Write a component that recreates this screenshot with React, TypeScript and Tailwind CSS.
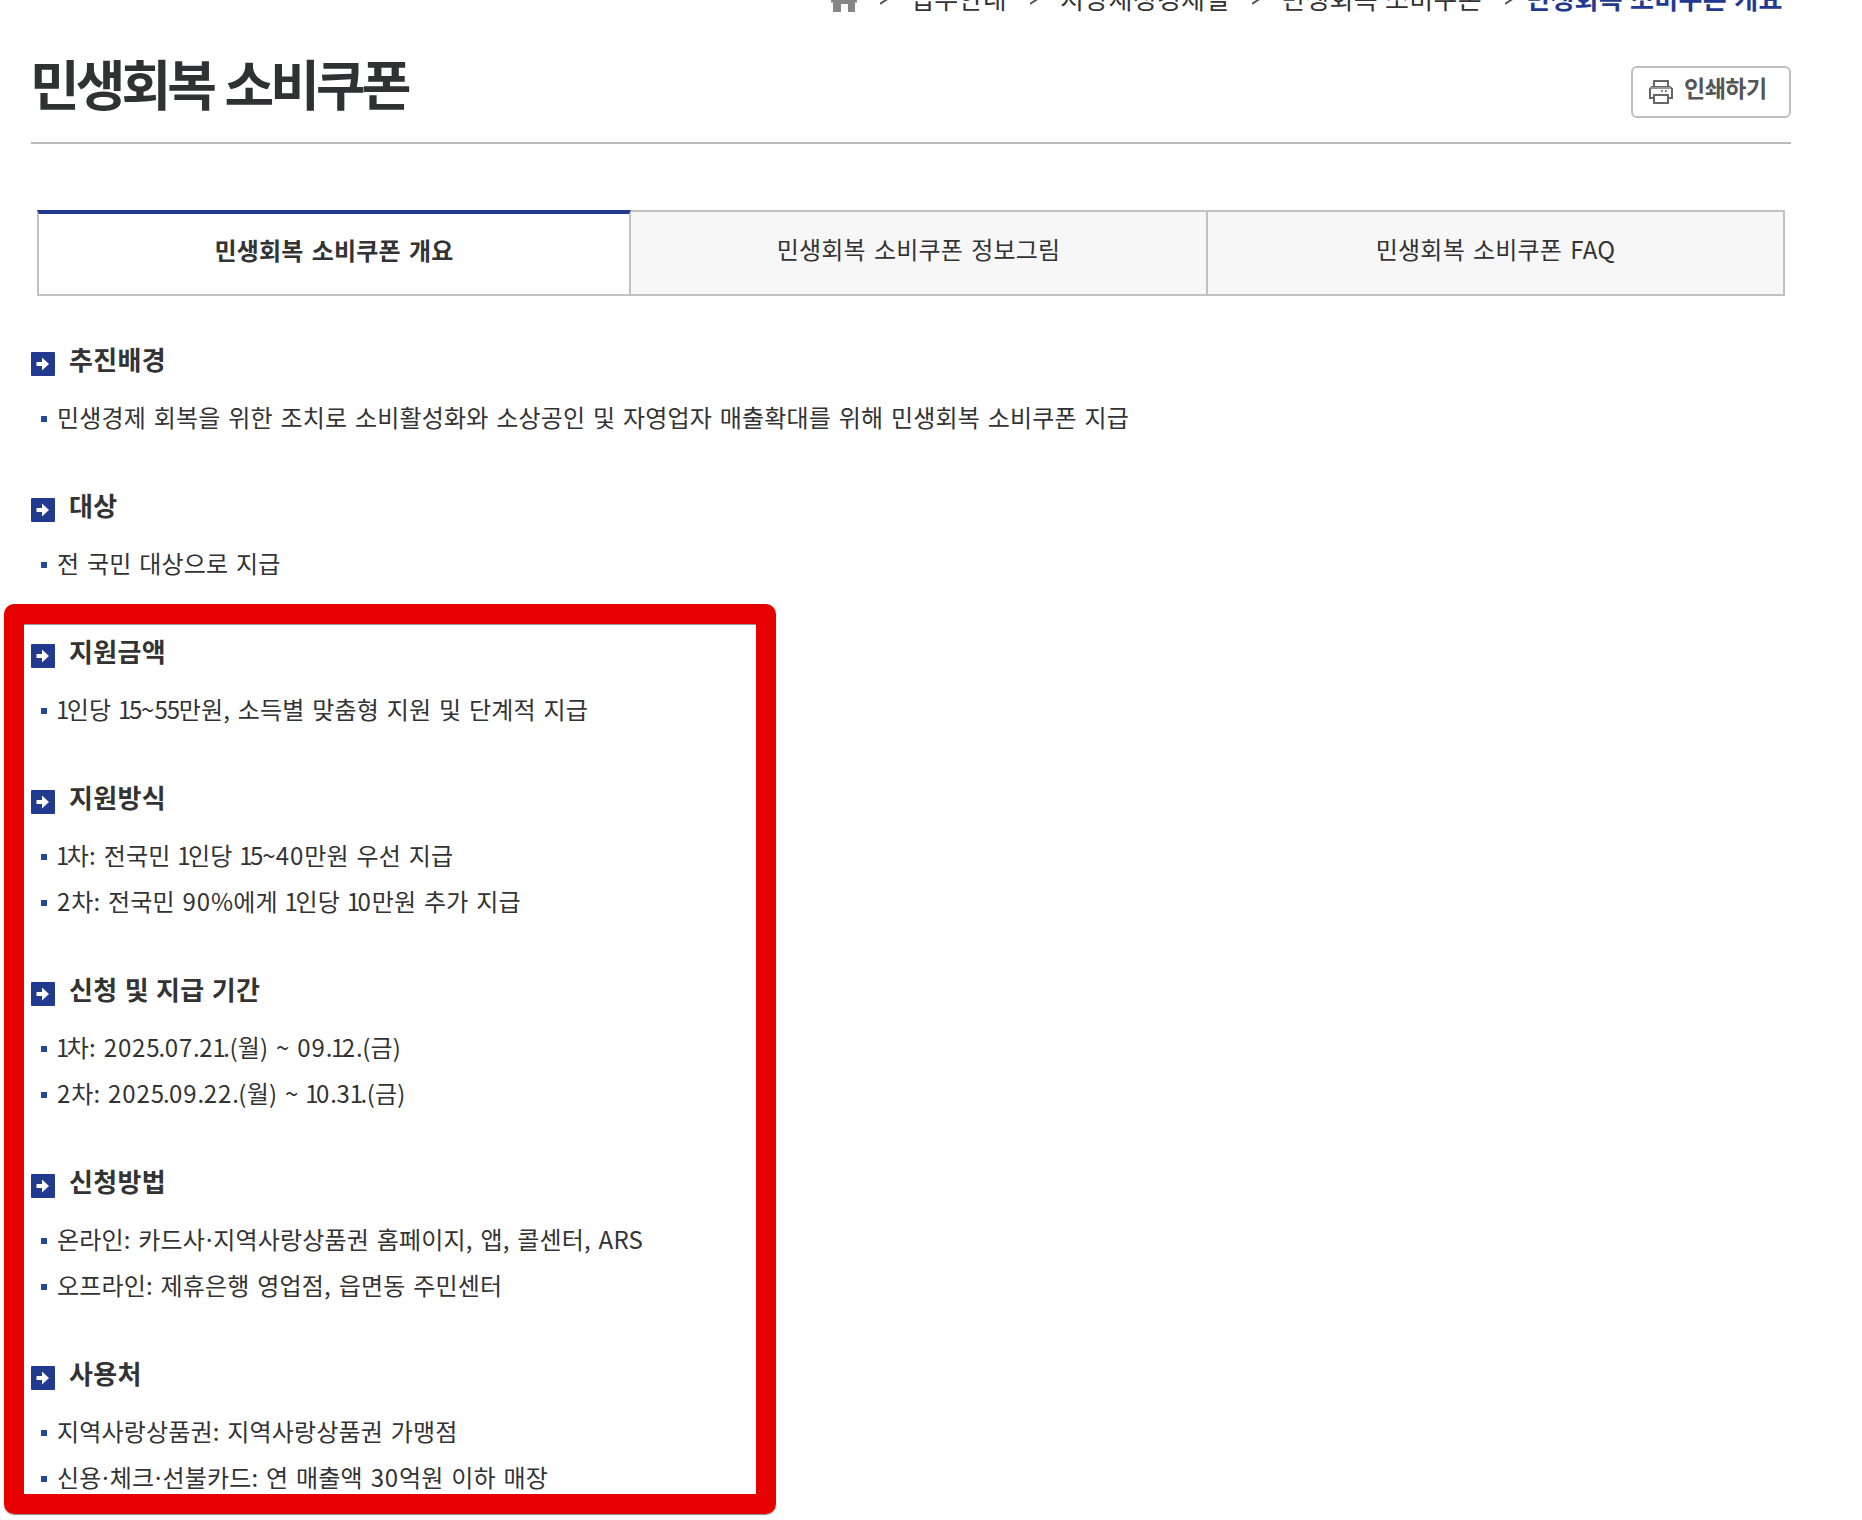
import { clsx } from "clsx"

interface Section {
  title: string
  items: string[]
}

const sections: Section[] = [
  {
    title: "추진배경",
    items: ["민생경제 회복을 위한 조치로 소비활성화와 소상공인 및 자영업자 매출확대를 위해 민생회복 소비쿠폰 지급"],
  },
  { title: "대상", items: ["전 국민 대상으로 지급"] },
  { title: "지원금액", items: ["1인당 15~55만원, 소득별 맞춤형 지원 및 단계적 지급"] },
  {
    title: "지원방식",
    items: ["1차: 전국민 1인당 15~40만원 우선 지급", "2차: 전국민 90%에게 1인당 10만원 추가 지급"],
  },
  {
    title: "신청 및 지급 기간",
    items: ["1차: 2025.07.21.(월) ~ 09.12.(금)", "2차: 2025.09.22.(월) ~ 10.31.(금)"],
  },
  {
    title: "신청방법",
    items: ["온라인: 카드사·지역사랑상품권 홈페이지, 앱, 콜센터, ARS", "오프라인: 제휴은행 영업점, 읍면동 주민센터"],
  },
  {
    title: "사용처",
    items: ["지역사랑상품권: 지역사랑상품권 가맹점", "신용·체크·선불카드: 연 매출액 30억원 이하 매장"],
  },
]

const tabs = [
  { label: "민생회복 소비쿠폰 개요", active: true },
  { label: "민생회복 소비쿠폰 정보그림", active: false },
  { label: "민생회복 소비쿠폰 FAQ", active: false },
]

function HomeIcon() {
  return (
    <svg className="h-7 w-[30px] shrink-0" viewBox="0 0 30 28" fill="#858585">
      <path d="M15 2 28 16.500v2h-2V28h-7v-8h-7v8H4v-9.500H2v-2z" />
    </svg>
  )
}

function PrinterIcon() {
  return (
    <svg className="size-6" viewBox="0 0 24 24" fill="none" stroke="#666" strokeWidth="2">
      <path d="M5 7V1h14v6" />
      <path d="M5 18H1V9l2-2h18l2 2v9h-4" />
      <path d="M2 8h20" stroke="#999" />
      <path d="M5 15h14v8H5z" />
      <path d="M12 11h2M16 11h2" stroke="#888" />
    </svg>
  )
}

function ArrowIcon() {
  return (
    <svg className="mt-1.5 size-6 shrink-0" viewBox="0 0 24 24">
      <rect width="24" height="24" rx="1" fill="#213a8f" />
      <path d="M5.500 10H11V5.500l7 6.500-7 6.500V14H5.500z" fill="#fff" />
    </svg>
  )
}

function Chevron() {
  return (
    <svg className="h-4 w-2.5 shrink-0" viewBox="0 0 10 16" fill="none" stroke="#555" strokeWidth="2">
      <path d="m0 2.500 9 5.500-9 6" />
    </svg>
  )
}

function Breadcrumb() {
  return (
    <nav className="-mt-[18px] flex h-8 items-center pl-[798px] text-[26px] leading-8 whitespace-nowrap text-[#333]">
      <HomeIcon />
      <span className="ml-[21px] flex"><Chevron /></span>
      <span className="ml-[20px] w-[98px] tracking-[0.300px]">업무안내</span>
      <span className="ml-[22px] flex"><Chevron /></span>
      <span className="ml-[20px] w-[170px] tracking-[0.300px]">지방재정경제실</span>
      <span className="ml-[22px] flex"><Chevron /></span>
      <span className="ml-[19px] w-[201px] tracking-[0.300px] [word-spacing:1px]">민생회복 소비쿠폰</span>
      <span className="ml-[23px] flex"><Chevron /></span>
      <strong className="ml-[11px] font-bold tracking-[0.300px] text-[#213a8f] [word-spacing:1px]">민생회복 소비쿠폰 개요</strong>
    </nav>
  )
}

function ItemText({ text }: { text: string }) {
  return (
    <span className="ml-2.5 pb-[5px] text-2xl tracking-[0.170px] whitespace-nowrap [word-spacing:2.200px]">
      {text.split(/(1|5|·|\.|[02-46-9]+)/).map((part, i) => {
        if (part === "1") return <span key={i} className="-ml-px tracking-[-2.500px]">1</span>
        if (part === "5") return <span key={i} className="tracking-[-1.200px]">5</span>
        if (part === ".") return <span key={i} className="tracking-[-0.500px]">.</span>
        if (part === "·") return <span key={i} className="-mx-[2.700px]">·</span>
        if (/^\d/.test(part)) return <span key={i} className="tracking-[0.900px]">{part}</span>
        return part
      })}
    </span>
  )
}

export default function App() {
  return (
    <div className="relative h-[1520px] w-[1862px] overflow-hidden bg-white pl-[31px] font-['Noto_Sans_CJK_KR',sans-serif] text-[#333]">
      <Breadcrumb />
      <header className="flex h-[130px] w-[1760px] items-start justify-between border-b-2 border-[#bbb]">
        <h1 className="mt-[34px] -ml-px text-[54px] leading-[70px] font-bold tracking-[-3.900px] text-[#2f3133] [word-spacing:3px]">
          민생회복 소비쿠폰
        </h1>
        <button className="mt-[52px] flex h-[52px] w-40 items-center rounded-md border-2 border-[#bfbfbf] pl-4 text-[#555]">
          <PrinterIcon />
          <span className="ml-[11px] pb-2.5 text-[23px] leading-8 font-bold tracking-[-0.500px] whitespace-nowrap">인쇄하기</span>
        </button>
      </header>

      <ul className="mt-[66px] ml-[6px] flex h-[86px] w-[1748px] text-2xl tracking-[0.200px] [word-spacing:2.500px]">
        {tabs.map((tab) => (
          <li
            key={tab.label}
            className={clsx(
              "flex items-center justify-center border-r-2 border-b-2 border-[#bfc1c2] pb-2",
              tab.active
                ? "w-[594px] border-t-4 border-l-2 border-t-[#213a8f] font-bold"
                : "w-[577px] border-t-2 bg-[#f7f7f7]",
            )}
          >
            {tab.label}
          </li>
        ))}
      </ul>

      <main className="mt-[46px]">
        {sections.map((section) => (
          <section key={section.title} className="pb-[46px]">
            <div className="flex h-[54px] items-start pt-1">
              <ArrowIcon />
              <h2 className="-mt-px ml-[14px] text-[26px] leading-[28px] font-bold tracking-[0.300px] [word-spacing:1px]">
                {section.title}
              </h2>
            </div>
            <ul>
              {section.items.map((item) => (
                <li key={item} className="flex h-[46px] items-center pl-2.5">
                  <span className="size-1.5 bg-[#24499b]" />
                  <ItemText text={item} />
                </li>
              ))}
            </ul>
          </section>
        ))}
      </main>

      <div className="absolute top-[604px] left-1 h-[910px] w-[772px] rounded-[10px] border-20 border-[#e60000] shadow-[0_1px_1px_#888,inset_0_1px_0_#999]" />
    </div>
  )
}
